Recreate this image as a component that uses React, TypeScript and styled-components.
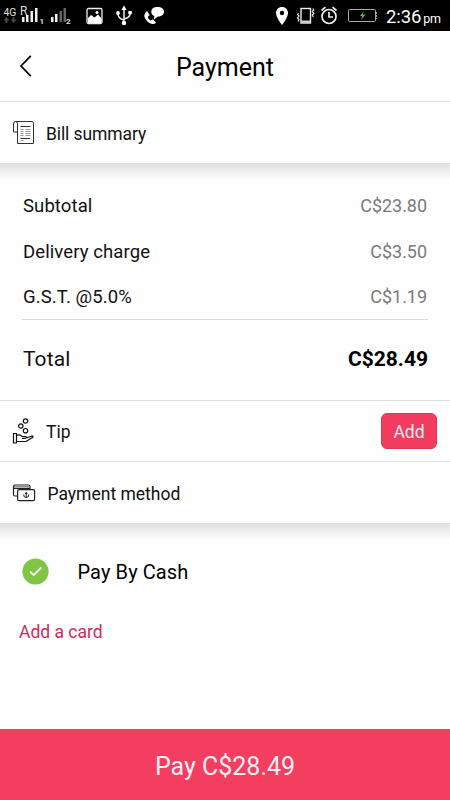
import React from "react";
import styled, { createGlobalStyle } from "styled-components";

const GlobalStyle = createGlobalStyle`
  * { box-sizing: border-box; }
  body { margin: 0; background: #fff; font-family: Roboto, "Liberation Sans", sans-serif; }
`;

const Screen = styled.div`
  width: 450px;
  height: 800px;
  display: flex;
  flex-direction: column;
  overflow: hidden;
  background: #fefefe;
  color: #111;
`;

const StatusBar = styled.div`
  height: 31px;
  flex: none;
  display: flex;
  justify-content: space-between;
  background: #000;
  color: #fff;
  svg { display: block; }
`;

const StatusRight = styled.div`
  display: flex;
`;

const Clock = styled.div`
  width: 66px;
  padding-left: 2px;
  line-height: 34px;
  font-size: 18.5px;
  letter-spacing: -0.1px;
  white-space: nowrap;
`;

const Meridiem = styled.span`
  margin-left: 2px;
  font-size: 12.5px;
  letter-spacing: -0.3px;
`;

const Header = styled.header`
  height: 71px;
  flex: none;
  display: grid;
  grid-template-columns: 50px 1fr 50px;
  align-items: center;
  border-bottom: 1px solid #dedede;
`;

const BackButton = styled.button`
  height: 44px;
  padding: 0 0 0 19px;
  border: 0;
  background: none;
  display: flex;
  align-items: center;
`;

const Title = styled.h1`
  margin: 4px 0 0;
  text-align: center;
  font-size: 25px;
  line-height: 32px;
  font-weight: 400;
  letter-spacing: 0;
  color: #000;
`;

const SectionRow = styled.div<{ $height: number; $line?: boolean; $gap?: number }>`
  height: ${(p) => p.$height}px;
  flex: none;
  display: flex;
  align-items: center;
  padding: 0 13px 0 12px;
  gap: ${(p) => p.$gap ?? 10}px;
  border-bottom: ${(p) => (p.$line ? "1px solid #dfdfdf" : "0")};
`;

const SectionLabel = styled.span<{ $spacing?: number }>`
  flex: 1;
  padding-top: 2px;
  font-size: 17.5px;
  line-height: 22px;
  letter-spacing: ${(p) => p.$spacing ?? 0}px;
`;

const Shade = styled.div`
  height: 18px;
  flex: none;
  background: linear-gradient(#e0e0e0, #ebebeb 40%, #fafafa 80%, #fefefe);
`;

const Summary = styled.div`
  height: 220px;
  flex: none;
  padding: 2px 22px 0;
  border-bottom: 1px solid #dedede;
`;

const Charges = styled.div`
  height: 137px;
  border-bottom: 1px solid #dadada;
`;

const ChargeRow = styled.div`
  height: 45.5px;
  display: flex;
  justify-content: space-between;
  align-items: center;
  padding: 1px 0 0 1px;
  font-size: 18.5px;
  letter-spacing: 0.1px;
`;

const Amount = styled.span`
  margin: -1px 1px 0 0;
  color: #7b7b7b;
  font-size: 18px;
  letter-spacing: -0.05px;
`;

const TotalRow = styled.div`
  height: 77px;
  display: flex;
  justify-content: space-between;
  align-items: center;
  padding-left: 1px;
  font-size: 21px;
  letter-spacing: 0.1px;
`;

const TotalAmount = styled.strong`
  font-weight: 700;
  font-size: 21px;
  letter-spacing: 0;
  color: #000;
`;

const AddButton = styled.button`
  width: 56px;
  height: 36px;
  padding: 2px 0 0;
  border: 1px solid #d9395a;
  border-radius: 6px;
  background: #f33d60;
  color: #ffe9ee;
  font: 400 17.5px Roboto, sans-serif;
`;

const MethodRow = styled.div`
  height: 61px;
  flex: none;
  display: flex;
  align-items: center;
  padding-left: 22px;
  gap: 28.5px;
  font-size: 20px;
  letter-spacing: 0.1px;
  color: #000;
`;

const AddCard = styled.a`
  flex: 1;
  padding: 18px 0 0 19px;
  font-size: 17.5px;
  line-height: 24px;
  letter-spacing: 0;
  color: #cf2b58;
`;

const PayButton = styled.button`
  height: 71px;
  flex: none;
  padding: 3px 0 0;
  border: 0;
  background: #f43e60;
  color: #fff0f3;
  font: 400 25px Roboto, sans-serif;
  letter-spacing: 0;
`;

const SignalIcons = () => (
  <svg width="180" height="31" viewBox="0 0 180 31" fill="#ddd" fontFamily="Roboto, sans-serif">
    <text x="3.5" y="16" fontSize="11" textLength="13" lengthAdjust="spacingAndGlyphs">4G</text>
    <text x="20" y="15" fontSize="12">R</text>
    <path d="M3.500 20.500L6.500 17l3 3.500H7.500v2.500h-2v-2.500zM10.500 19.500l3 3.500 3-3.500h-2V17h-2v2.500z" fill="#484848" />
    <path d="M22 17h2.500v5H22zM26 15h2.500v7H26zM30.500 11H33v11h-2.500zM35 8h2.500v14H35z" fill="#f2f2f2" />
    <text x="39.500" y="23.500" fontSize="8" fontWeight="700">1</text>
    <path d="M51 17h2.500v5H51zM55 14h2.500v8H55z" fill="#f2f2f2" />
    <path d="M59.500 11H62v11h-2.500zM63.500 8H66v14h-2.500z" fill="#666" />
    <text x="66" y="23.500" fontSize="8" fontWeight="700">2</text>
    <rect x="87" y="8.500" width="15" height="15" rx="1.500" fill="none" stroke="#eee" strokeWidth="1.300" />
    <path d="M88 18l3-3 3.500 2.500 3.500-3 3.500 4V23H88z" fill="#fff" />
    <circle cx="97" cy="12.500" r="1.500" fill="#fff" />
    <path d="M124 9v14M124 20c-4-1-6-3-6-6M124 19c4-1 6-3 6-5" fill="none" stroke="#eee" strokeWidth="1.500" />
    <path d="M124 5.500l2.600 4.500h-5.200zM128.300 11h3.500v3.300h-3.500z" fill="#fff" />
    <circle cx="118" cy="13" r="1.900" fill="#fff" />
    <circle cx="124" cy="23" r="2.200" fill="#fff" />
    <path d="M147 11c-4 3-3 7 0 10 3 3.500 7 4 9 1.500l-3-3.300-2.600 1.300c-1.500-1-2.300-2.300-2.500-4l1.800-1.600z" fill="#fff" />
    <path d="M157.500 7c4 0 6.500 2 6.500 4.800s-2.500 4.900-6.500 4.900l-3.500 2.800.3-3.600c-2-.8-3-2.200-3-4C151.300 9 153.500 7 157.500 7z" fill="#fff" />
  </svg>
);

const DeviceIcons = () => (
  <svg width="114" height="31" viewBox="270 0 114 31" fill="none" stroke="#eee">
    <path d="M282 7c-3.700 0-6 2.700-6 6 0 4.500 6 12 6 12s6-7.500 6-12c0-3.300-2.300-6-6-6z" fill="#fff" stroke="none" />
    <circle cx="282" cy="13" r="2.200" fill="#000" stroke="none" />
    <rect x="301" y="8.500" width="9.500" height="14.500" strokeWidth="1.400" />
    <path d="M301 20.500h9.500v2.500H301z" fill="#ccc" stroke="none" />
    <path d="M298.500 13l-1 1.500 1.500 1.500-1.500 2 1.500 1.500-1 2M312.800 8.500l1 1.500-1.500 1.500 1.500 2-1.500 1.500 1 2" strokeWidth="1.200" />
    <circle cx="329" cy="16.500" r="7" strokeWidth="1.700" />
    <path d="M329 12v5h4M321.500 10.500l4-3.300M336.500 10.500l-4-3.300" strokeWidth="1.700" />
    <rect x="348.500" y="9.500" width="27" height="12" rx="1" stroke="#aaa" />
    <path d="M376.500 12v7" stroke="#999" strokeDasharray="2 1" />
    <path d="M364 11l-4 5h2.300l-1.300 4 4.500-5.500h-2.700z" fill="#62b936" stroke="none" />
  </svg>
);

const BackIcon = () => (
  <svg width="14" height="24" viewBox="0 0 14 24" fill="none" stroke="#000" strokeWidth="1.700">
    <path d="M11.800 1.800L2 12l9.800 10.200" />
  </svg>
);

const BillIcon = () => (
  <svg width="24" height="26" viewBox="0 0 24 26" fill="none" stroke="#333" strokeWidth="1">
    <path d="M3.500 1.500h16.500q1.500 0 1.500 2v20H5.500V4q0-2.500-2-2.500t-2 2.500v8h4" />
    <path d="M8.500 6.500h10M8.500 18.500h9.500" />
    <path d="M8.500 9.500h3M13.500 9.500H18.500M8.500 11.500h3M13.500 11.500H18.500M8.500 13.500h3M13.500 13.500H18.500M8.500 15.500h3M13.500 15.500H18.500M8.500 20.500h3" stroke="#999" />
  </svg>
);

const TipIcon = () => (
  <svg width="24" height="28" viewBox="0 0 24 28" fill="none" stroke="#111" strokeWidth="1.200">
    <circle cx="13.500" cy="4" r="2.200" />
    <circle cx="8.800" cy="9" r="2.200" />
    <circle cx="13.500" cy="13.700" r="2.200" />
    <path d="M1.500 16.500h3v9.500h-3zM4.500 18.500c3-1.500 4.500 0 6 1h3.500q1 1.500-1 1.800H10M14 21l6.500-2q1 .5 0 1.500L14 24.500H4.500" />
  </svg>
);

const CashIcon = () => (
  <svg width="24" height="20" viewBox="0 0 24 20" fill="none" stroke="#222" strokeWidth="1.200">
    <path d="M5.500 13H3q-1.500 0-1.500-1.500v-8Q1.500 2 3 2h13.500Q18 2 18 3.500V6M1.500 5.300H18" />
    <path d="M2 3.700h15.500" stroke="#888" />
    <rect x="5.600" y="6.700" width="17" height="11" rx="1.500" />
    <path d="M14.200 9v5.500M11.700 11.500q-.4 3 2.500 3t2.500-3M13 10.500h2.400" strokeWidth="1" />
  </svg>
);

const CheckIcon = () => (
  <svg width="27" height="27" viewBox="0 0 27 27" fill="none">
    <circle cx="13.500" cy="13.500" r="13.100" fill="#80c543" />
    <path d="M8 13.500l3.700 3.600 7.600-7.600" stroke="#fff" strokeWidth="1.800" />
  </svg>
);

const charges = [
  { label: "Subtotal", amount: "C$23.80" },
  { label: "Delivery charge", amount: "C$3.50" },
  { label: "G.S.T. @5.0%", amount: "C$1.19" },
];

export default function App() {
  return (
    <Screen>
      <GlobalStyle />
      <StatusBar>
        <SignalIcons />
        <StatusRight>
          <DeviceIcons />
          <Clock>2:36<Meridiem>pm</Meridiem></Clock>
        </StatusRight>
      </StatusBar>
      <Header>
        <BackButton aria-label="Back"><BackIcon /></BackButton>
        <Title>Payment</Title>
      </Header>
      <SectionRow $height={61}>
        <BillIcon />
        <SectionLabel $spacing={-0.1}>Bill summary</SectionLabel>
      </SectionRow>
      <Shade />
      <Summary>
        <Charges>
          {charges.map((c) => (
            <ChargeRow key={c.label}>
              <span>{c.label}</span>
              <Amount>{c.amount}</Amount>
            </ChargeRow>
          ))}
        </Charges>
        <TotalRow>
          <span>Total</span>
          <TotalAmount>C$28.49</TotalAmount>
        </TotalRow>
      </Summary>
      <SectionRow $height={61} $line>
        <TipIcon />
        <SectionLabel>Tip</SectionLabel>
        <AddButton>Add</AddButton>
      </SectionRow>
      <SectionRow $height={61} $gap={11.5}>
        <CashIcon />
        <SectionLabel>Payment method</SectionLabel>
      </SectionRow>
      <Shade />
      <MethodRow>
        <CheckIcon />
        <span>Pay By Cash</span>
      </MethodRow>
      <AddCard>Add a card</AddCard>
      <PayButton>Pay C$28.49</PayButton>
    </Screen>
  );
}
